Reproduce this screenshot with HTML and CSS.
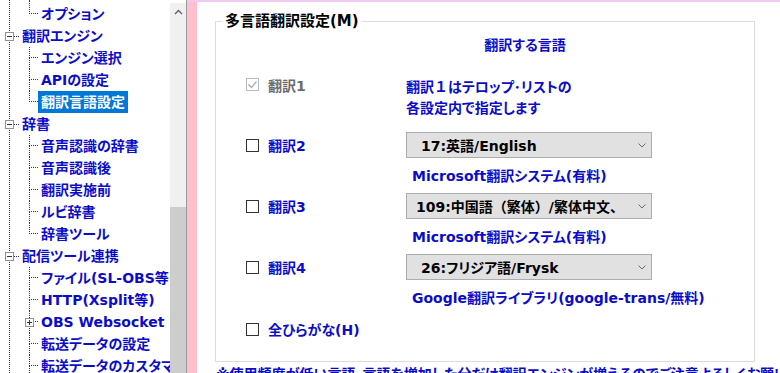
FILE: index.html
```html
<!DOCTYPE html>
<html lang="ja">
<head>
  <meta charset="UTF-8" />
  <meta name="viewport" content="width=device-width, initial-scale=1.0"/>
  <title>多言語翻訳設定</title>
  <link rel="stylesheet" href="styles.css">
</head>
<body>
  <div class="side">
    <div class="tree">
      <div class="tree-in">
        <div class="kids">
          <div class="row first last"><span class="conn"><i class="c-top"></i><i class="c-bot"></i></span><span class="label">オプション</span></div>
        </div>

        <div class="row top">
          <svg class="box" width="9" height="9" viewBox="0 0 9 9"><rect x="0.5" y="0.5" width="8" height="8" fill="#fff" stroke="#919191"/><path d="M2 4.5h5" stroke="#333"/></svg>
          <span class="dots"></span><span class="label">翻訳エンジン</span>
        </div>
        <div class="kids">
          <div class="row"><span class="conn"><i class="c-top"></i><i class="c-bot"></i></span><span class="label">エンジン選択</span></div>
          <div class="row"><span class="conn"><i class="c-top"></i><i class="c-bot"></i></span><span class="label">APIの設定</span></div>
          <div class="row last"><span class="conn"><i class="c-top"></i><i class="c-bot"></i></span><span class="label sel">翻訳言語設定</span></div>
        </div>

        <div class="row top">
          <svg class="box" width="9" height="9" viewBox="0 0 9 9"><rect x="0.5" y="0.5" width="8" height="8" fill="#fff" stroke="#919191"/><path d="M2 4.5h5" stroke="#333"/></svg>
          <span class="dots"></span><span class="label">辞書</span>
        </div>
        <div class="kids">
          <div class="row"><span class="conn"><i class="c-top"></i><i class="c-bot"></i></span><span class="label">音声認識の辞書</span></div>
          <div class="row"><span class="conn"><i class="c-top"></i><i class="c-bot"></i></span><span class="label">音声認識後</span></div>
          <div class="row"><span class="conn"><i class="c-top"></i><i class="c-bot"></i></span><span class="label">翻訳実施前</span></div>
          <div class="row"><span class="conn"><i class="c-top"></i><i class="c-bot"></i></span><span class="label">ルビ辞書</span></div>
          <div class="row last"><span class="conn"><i class="c-top"></i><i class="c-bot"></i></span><span class="label">辞書ツール</span></div>
        </div>

        <div class="row top">
          <svg class="box" width="9" height="9" viewBox="0 0 9 9"><rect x="0.5" y="0.5" width="8" height="8" fill="#fff" stroke="#919191"/><path d="M2 4.5h5" stroke="#333"/></svg>
          <span class="dots"></span><span class="label">配信ツール連携</span>
        </div>
        <div class="kids">
          <div class="row"><span class="conn"><i class="c-top"></i><i class="c-bot"></i></span><span class="label">ファイル(SL-OBS等)</span></div>
          <div class="row"><span class="conn"><i class="c-top"></i><i class="c-bot"></i></span><span class="label">HTTP(Xsplit等)</span></div>
          <div class="row">
            <span class="conn"><i class="c-top"></i><i class="c-bot"></i>
              <svg class="box plus" width="9" height="9" viewBox="0 0 9 9"><rect x="0.5" y="0.5" width="8" height="8" fill="#fff" stroke="#919191"/><path d="M2 4.5h5M4.5 2v5" stroke="#333"/></svg>
            </span>
            <span class="label">OBS Websocket</span>
          </div>
          <div class="row"><span class="conn"><i class="c-top"></i><i class="c-bot"></i></span><span class="label">転送データの設定</span></div>
          <div class="row"><span class="conn"><i class="c-top"></i><i class="c-bot"></i></span><span class="label">転送データのカスタマイズ</span></div>
        </div>
      </div>
    </div>
    <div class="scroll">
      <div class="arrow">
        <svg width="9" height="6" viewBox="0 0 9 6"><path d="M1 5l3.5-3.5L8 5" stroke="#606060" stroke-width="1.4" fill="none"/></svg>
      </div>
      <div class="thumb"></div>
    </div>
  </div>

  <div class="right">
    <div class="pink"></div>
    <div class="main">
      <fieldset>
        <legend>多言語翻訳設定(M)</legend>
        <div class="head">翻訳する言語</div>

        <div class="opt r1">
          <div class="lab off">
            <svg class="cb" width="13" height="13" viewBox="0 0 13 13"><rect x="0.5" y="0.5" width="12" height="12" fill="#fff" stroke="#bcbcbc"/><path d="M2.5 6.5l3 3 5-6" stroke="#a8a8a8" stroke-width="1.2" fill="none"/></svg>
            <span>翻訳1</span>
          </div>
          <div class="val info">翻訳<span class="fw">１</span>はテロップ･リストの<br>各設定内で指定します</div>
        </div>

        <div class="opt r2">
          <div class="lab">
            <svg class="cb" width="13" height="13" viewBox="0 0 13 13"><rect x="0.5" y="0.5" width="12" height="12" fill="#fff" stroke="#333"/></svg>
            <span>翻訳2</span>
          </div>
          <div class="val">
            <div class="select"><span>17:英語/English</span>
              <svg width="8" height="5" viewBox="0 0 8 5"><path d="M0.5 0.5l3.5 3.5 3.5-3.5" stroke="#6a6a6a" fill="none"/></svg>
            </div>
            <div class="note">Microsoft翻訳システム(有料)</div>
          </div>
        </div>

        <div class="opt">
          <div class="lab">
            <svg class="cb" width="13" height="13" viewBox="0 0 13 13"><rect x="0.5" y="0.5" width="12" height="12" fill="#fff" stroke="#333"/></svg>
            <span>翻訳3</span>
          </div>
          <div class="val">
            <div class="select tight"><span>109:中国語<span class="fw">（</span>繁体<span class="fw">）</span>/繁体中文、</span>
              <svg width="8" height="5" viewBox="0 0 8 5"><path d="M0.5 0.5l3.5 3.5 3.5-3.5" stroke="#6a6a6a" fill="none"/></svg>
            </div>
            <div class="note">Microsoft翻訳システム(有料)</div>
          </div>
        </div>

        <div class="opt">
          <div class="lab">
            <svg class="cb" width="13" height="13" viewBox="0 0 13 13"><rect x="0.5" y="0.5" width="12" height="12" fill="#fff" stroke="#333"/></svg>
            <span>翻訳4</span>
          </div>
          <div class="val">
            <div class="select"><span>26:フリジア語/Frysk</span>
              <svg width="8" height="5" viewBox="0 0 8 5"><path d="M0.5 0.5l3.5 3.5 3.5-3.5" stroke="#6a6a6a" fill="none"/></svg>
            </div>
            <div class="note">Google翻訳ライブラリ(google-trans/無料)</div>
          </div>
        </div>

        <div class="opt r5">
          <div class="lab">
            <svg class="cb" width="13" height="13" viewBox="0 0 13 13"><rect x="0.5" y="0.5" width="12" height="12" fill="#fff" stroke="#333"/></svg>
            <span>全ひらがな(H)</span>
          </div>
        </div>
      </fieldset>
      <p class="foot">※使用頻度が低い言語、言語を増加した分だけ翻訳エンジンが増えるのでご注意よろしくお願いします</p>
    </div>
  </div>
</body>
</html>
```

FILE: styles.css
```css
* { box-sizing: border-box; }
body {
  margin: 0;
  height: 373px;
  overflow: hidden;
  display: flex;
  background: #fff;
  color: #0c0cc8;
  font-family: "DejaVu Sans", "Noto Sans CJK JP", sans-serif;
  font-size: 14px;
  font-weight: bold;
  font-feature-settings: "palt";
}
.fw { font-feature-settings: normal; }

/* left tree */
.side {
  display: flex;
  width: 187px;
  flex-shrink: 0;
  border-right: 1px solid #9a9a9a;
}
.tree {
  width: 170px;
  overflow: hidden;
  white-space: nowrap;
}
.tree-in {
  margin-left: 9px;
  border-left: 1px dotted #2a2aa0;
  min-height: 100%;
}
.row {
  display: flex;
  align-items: center;
  height: 22px;
}
.row.first { height: 25px; }
.row.first .c-top { height: 14px; }
.row.first .label { padding-top: 3px; }
.row.top { margin-left: -5px; }
.box {
  display: block;
  flex-shrink: 0;
}
.dots {
  width: 5px;
  border-top: 1px dotted #2a2aa0;
}
.label {
  line-height: 22px;
  padding: 0 3px;
}
.label.sel {
  background: #0078d7;
  color: #fff;
}
.kids { padding-left: 19px; }
.conn {
  position: relative;
  display: flex;
  flex-direction: column;
  width: 9px;
  height: 100%;
  flex-shrink: 0;
}
.conn i { display: block; }
.c-top {
  height: 11px;
  border-left: 1px dotted #2a2aa0;
  border-bottom: 1px dotted #2a2aa0;
}
.c-bot {
  flex: 1;
  border-left: 1px dotted #2a2aa0;
}
.last .c-bot { border-left-color: transparent; }
.conn .plus {
  position: absolute;
  left: -4px;
  top: 7px;
}

.scroll {
  width: 16px;
  margin-top: 3px;
  background: #f0f0f0;
  display: flex;
  flex-direction: column;
}
.arrow {
  height: 17px;
  display: flex;
  align-items: center;
  justify-content: center;
}
.thumb {
  margin-top: auto;
  height: 166px;
  background: #cdcdcd;
}

/* right side */
.right {
  flex: 1;
  display: flex;
  border-top: 2px solid #efc9ef;
}
.pink {
  width: 10px;
  background: #ffc0cb;
}
.main {
  flex: 1;
  padding-left: 18px;
}
fieldset {
  margin: 9px 0 0;
  width: 540px;
  padding: 0 0 22px;
  border: 1px solid #dcdcdc;
}
legend {
  margin-left: 6px;
  padding: 0 3px;
  color: #000;
  font-size: 15px;
  line-height: 20px;
}
.head {
  margin: 4px 0 0 190px;
  width: 238px;
  text-align: center;
  line-height: 20px;
}
.opt {
  display: flex;
  margin-top: 7px;
}
.opt.r1 { margin-top: 22px; }
.opt.r2 { margin-top: 13px; }
.opt.r5 { margin-top: 11px; }
.lab {
  width: 190px;
  height: 26px;
  padding-left: 30px;
  display: flex;
  align-items: center;
  gap: 9px;
}
.r1 .lab { height: 21px; margin-top: -3px; }
.r5 .lab { height: 20px; }
.lab.off { color: #6d6d6d; }
.cb { flex-shrink: 0; }
.val { width: 246px; }
.info { line-height: 21px; }
.select {
  display: flex;
  align-items: center;
  height: 26px;
  padding: 0 5px 0 14px;
  border: 1px solid #adadad;
  background: #e1e1e1;
  color: #000;
}
.select.tight { padding-left: 9px; }
.select > span {
  flex: 1;
  overflow: hidden;
  white-space: nowrap;
}
.select svg {
  flex-shrink: 0;
  margin-left: 4px;
}
.note {
  margin-top: 8px;
  padding-left: 6px;
  line-height: 20px;
  white-space: nowrap;
}
.foot {
  margin: 2px 0 0 1px;
  line-height: 20px;
  white-space: nowrap;
}
```
